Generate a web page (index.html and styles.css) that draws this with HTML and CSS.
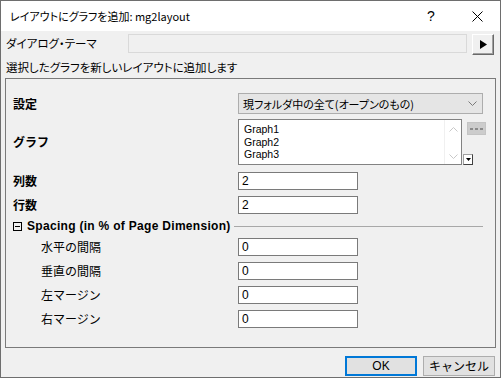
FILE: index.html
```html
<!DOCTYPE html>
<html lang="ja">
<head>
    <meta charset="utf-8">
    <title>レイアウトにグラフを追加</title>
    <link rel="stylesheet" href="styles.css">
</head>
<body>
    <div class="window">
        <div class="titlebar">
            <span class="title">レイアウトにグラフを追加: mg2layout</span>
            <span class="tb-btn">?</span>
            <span class="tb-btn">
                <svg width="11" height="11" viewBox="0 0 11 11"><path d="M0.5 0.5 L10.5 10.5 M10.5 0.5 L0.5 10.5" stroke="#000" stroke-width="1"/></svg>
            </span>
        </div>
        <div class="client">
            <div class="theme-row">
                <span class="theme-label">ダイアログ・テーマ</span>
                <div class="theme-box"></div>
                <div class="arrow-btn">
                    <svg width="7" height="9" viewBox="0 0 7 9"><path d="M0 0 L7 4.5 L0 9 Z" fill="#000"/></svg>
                </div>
            </div>
            <div class="hint">選択したグラフを新しいレイアウトに追加します</div>
            <div class="panel">
                <div class="row row-select">
                    <span class="label bold">設定</span>
                    <div class="select">
                        <span>現フォルダ中の全て(オープンのもの)</span>
                        <svg width="9" height="5" viewBox="0 0 9 5"><path d="M0.5 0.5 L4.5 4.5 L8.5 0.5" stroke="#7a7a7a" fill="none"/></svg>
                    </div>
                </div>
                <div class="row row-list">
                    <span class="label bold">グラフ</span>
                    <div class="list-wrap">
                        <div class="listbox">
                            <div class="items">
                                <div>Graph1</div>
                                <div>Graph2</div>
                                <div>Graph3</div>
                            </div>
                            <div class="scrollbar">
                                <svg width="9" height="5" viewBox="0 0 9 5"><path d="M0.5 4.5 L4.5 0.5 L8.5 4.5" stroke="#c8c8c8" fill="none"/></svg>
                                <svg width="9" height="5" viewBox="0 0 9 5"><path d="M0.5 0.5 L4.5 4.5 L8.5 0.5" stroke="#c8c8c8" fill="none"/></svg>
                            </div>
                        </div>
                        <div class="list-side">
                            <div class="dots-btn"><span></span><span></span><span></span></div>
                            <div class="drop-btn">
                                <svg width="5" height="3" viewBox="0 0 5 3"><path d="M0 0 L5 0 L2.5 3 Z" fill="#000"/></svg>
                            </div>
                        </div>
                    </div>
                </div>
                <div class="row row-input">
                    <span class="label bold">列数</span>
                    <div class="input">2</div>
                </div>
                <div class="row row-input">
                    <span class="label bold">行数</span>
                    <div class="input">2</div>
                </div>
                <div class="group-head">
                    <span class="collapse-box"><span></span></span>
                    <span class="group-title">Spacing (in % of Page Dimension)</span>
                    <span class="group-line"></span>
                </div>
                <div class="row row-input sub">
                    <span class="label">水平の間隔</span>
                    <div class="input">0</div>
                </div>
                <div class="row row-input sub">
                    <span class="label">垂直の間隔</span>
                    <div class="input">0</div>
                </div>
                <div class="row row-input sub">
                    <span class="label">左マージン</span>
                    <div class="input">0</div>
                </div>
                <div class="row row-input sub">
                    <span class="label">右マージン</span>
                    <div class="input">0</div>
                </div>
            </div>
            <div class="footer">
                <div class="btn btn-ok">OK</div>
                <div class="btn">キャンセル</div>
            </div>
        </div>
    </div>
</body>
</html>
```

FILE: styles.css
```css
html, body {
    margin: 0;
    overflow: hidden;
    background: #ffffff;
}
* {
    box-sizing: border-box;
}
body {
    font-family: "Noto Sans CJK JP", sans-serif;
    font-size: 12px;
    color: #000;
}
.window {
    width: 501px;
    height: 378px;
    border: 1px solid #6e6e6e;
    display: flex;
    flex-direction: column;
}
.titlebar {
    height: 30px;
    background: #ffffff;
    display: flex;
    align-items: center;
}
.title {
    flex: 1;
    padding-left: 9px;
    font-size: 11px;
    font-feature-settings: "palt";
    line-height: 16px;
}
.tb-btn {
    width: 46px;
    height: 30px;
    display: flex;
    align-items: center;
    justify-content: center;
    font-family: "Liberation Sans", sans-serif;
    font-size: 14px;
}
.client {
    flex: 1;
    background: #f0f0f0;
    padding: 3px 5px 0 4px;
    display: flex;
    flex-direction: column;
}
.theme-row {
    display: flex;
    align-items: flex-start;
    height: 21px;
}
.theme-label {
    width: 123px;
    line-height: 19px;
    font-size: 11.5px;
    font-feature-settings: "palt";
    padding-left: 1px;
}
.theme-box {
    width: 339px;
    height: 19px;
    border: 1px solid #d9d9d9;
    background: #f0f0f0;
}
.arrow-btn {
    margin-left: 5px;
    width: 22px;
    height: 21px;
    background: #f0f0f0;
    border-top: 1px solid #ffffff;
    border-left: 1px solid #ffffff;
    border-right: 1px solid #696969;
    border-bottom: 1px solid #696969;
    box-shadow: inset -1px -1px 0 #a0a0a0;
    display: flex;
    align-items: center;
    justify-content: center;
    padding-left: 1px;
}
.hint {
    margin-top: 5px;
    line-height: 14px;
    padding-left: 1px;
    font-size: 11.5px;
    font-feature-settings: "palt";
}
.panel {
    margin-top: 4px;
    width: 491px;
    height: 270px;
    border: 1px solid #7a7a7a;
    padding: 14px 0 0 7px;
    display: flex;
    flex-direction: column;
}
.row {
    display: grid;
    grid-template-columns: 225px auto;
    align-items: center;
}
.label {
    line-height: 14px;
}
.bold {
    font-weight: 700;
}
.select {
    width: 245px;
    height: 21px;
    border: 1px solid #adadad;
    background: #e5e5e5;
    display: flex;
    align-items: center;
    justify-content: space-between;
    padding: 0 5px 0 4px;
    font-size: 11px;
    font-feature-settings: "palt";
}
.row-list {
    margin-top: 5px;
}
.list-wrap {
    display: flex;
}
.listbox {
    width: 224px;
    height: 46px;
    border: 1px solid #828282;
    background: #ffffff;
    display: flex;
}
.items {
    flex: 1;
    padding: 3px 0 0 5px;
    font-family: "Liberation Sans", sans-serif;
    font-size: 10.5px;
    line-height: 12.5px;
}
.scrollbar {
    width: 17px;
    border-left: 1px solid #f0f0f0;
    display: flex;
    flex-direction: column;
    justify-content: space-between;
    align-items: center;
    padding: 7px 0 5px;
}
.list-side {
    display: flex;
    flex-direction: column;
    justify-content: space-between;
}
.dots-btn {
    margin: 3px 0 0 5px;
    width: 19px;
    height: 13px;
    background: #cccccc;
    border: 1px solid #c4c4c4;
    display: flex;
    align-items: center;
    justify-content: center;
    gap: 2px;
}
.dots-btn span {
    width: 3px;
    height: 2px;
    background: #8a8a8a;
}
.drop-btn {
    margin-left: 1px;
    width: 10px;
    height: 11px;
    background: #ffffff;
    border-top: 1px solid #a0a0a0;
    border-left: 1px solid #a0a0a0;
    border-right: 1px solid #404040;
    border-bottom: 1px solid #404040;
    display: flex;
    align-items: center;
    justify-content: center;
}
.row-input {
    margin-top: 6px;
}
.row-list + .row-input {
    margin-top: 7px;
}
.input {
    width: 120px;
    height: 18px;
    border: 1px solid #7a7a7a;
    background: #ffffff;
    padding-left: 3px;
    font-family: "Liberation Sans", sans-serif;
    font-size: 12px;
    line-height: 16px;
}
.sub .label {
    padding-left: 28px;
}
.group-head {
    margin-top: 4px;
    height: 16px;
    display: flex;
    align-items: center;
}
.group-head + .row-input {
    margin-top: 4px;
}
.collapse-box {
    width: 9px;
    height: 9px;
    border: 1px solid #000;
    display: flex;
    align-items: center;
    justify-content: center;
}
.collapse-box span {
    width: 5px;
    height: 1px;
    background: #000;
}
.group-title {
    margin-left: 5px;
    font-family: "Liberation Sans", sans-serif;
    font-weight: 700;
    font-size: 12px;
    letter-spacing: 0.3px;
}
.group-line {
    flex: 1;
    margin: 0 12px 0 3px;
    height: 1px;
    background: #a8a8a8;
}
.footer {
    margin-top: 8px;
    display: flex;
    justify-content: flex-end;
    gap: 6px;
}
.btn {
    width: 72px;
    height: 20px;
    border: 1px solid #adadad;
    background: #e1e1e1;
    display: flex;
    align-items: center;
    justify-content: center;
    line-height: 14px;
}
.btn-ok {
    border: 2px solid #0078d7;
    font-family: "Liberation Sans", sans-serif;
}
```
